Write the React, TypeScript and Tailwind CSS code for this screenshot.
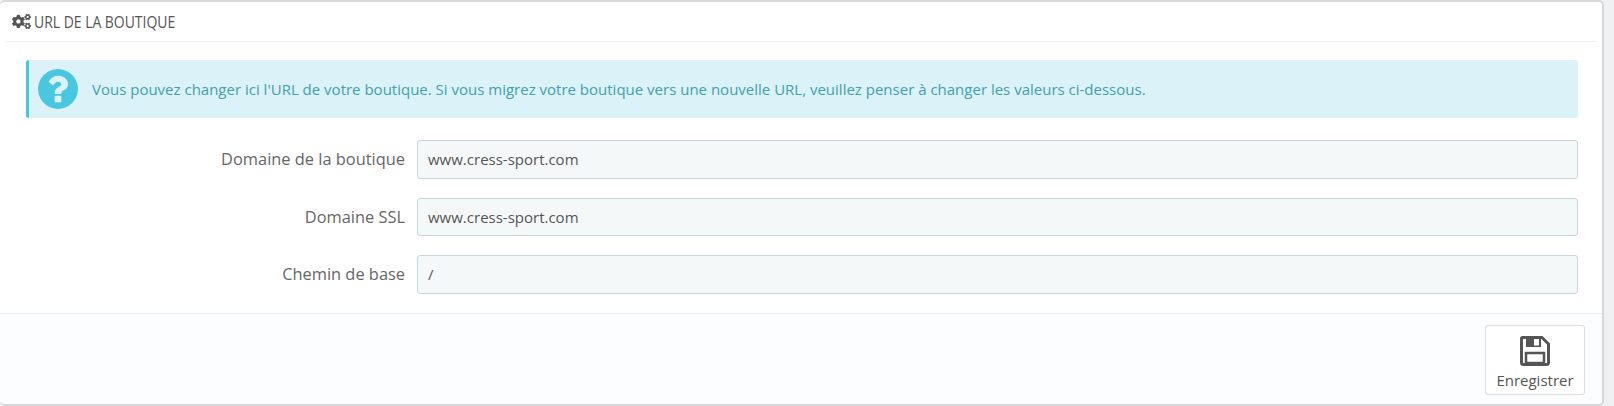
import { FaCogs } from "react-icons/fa";

const fields = [
  { label: "Domaine de la boutique", value: "www.cress-sport.com", height: "h-[39px]", gap: "mb-[19px]" },
  { label: "Domaine SSL", value: "www.cress-sport.com", height: "h-[38px]", gap: "mb-[19px]" },
  { label: "Chemin de base", value: "/", height: "h-[39px]", gap: "mb-0" },
];

function SaveIcon() {
  return (
    <svg width="30" height="30" viewBox="0 0 30 30" fill="none">
      <path d="M2.5 1.5H22L28.5 8V26.5Q28.5 28.5 26.5 28.5H3.5Q1.5 28.5 1.5 26.5V2.5Q1.5 1.5 2.5 1.5Z" stroke="#555" strokeWidth="3" strokeLinejoin="round" />
      <rect x="6" y="17" width="18" height="10" fill="none" stroke="#555" strokeWidth="2.5" />
      <path d="M6 2H21V11H6Z" fill="#555" />
      <rect x="14" y="3" width="5" height="6.5" fill="#fff" />
    </svg>
  );
}

function QuestionIcon() {
  return (
    <svg className="mr-[14px] shrink-0" width="40" height="40" viewBox="128 128 1536 1536" fill="#4ac7e0">
      <path d="M1024 1376v-192q0-14-9-23t-23-9h-192q-14 0-23 9t-9 23v192q0 14 9 23t23 9h192q14 0 23-9t9-23zm256-672q0-88-55.5-163t-138.5-116-170-41q-243 0-371 213-15 24 8 42l132 100q7 6 19 6 16 0 25-12 53-68 86-92 34-24 86-24 48 0 85.5 26t37.5 59q0 38-20 61t-68 45q-63 28-115.5 86.5t-52.5 125.5v36q0 14 9 23t23 9h192q14 0 23-9t9-23q0-19 21.5-49.5t54.5-49.5q32-18 49-28.5t46-35 44.5-48 28-60.5 12.5-81zm384 192q0 209-103 385.5t-279.5 279.5-385.5 103-385.5-103-279.5-279.5-103-385.5 103-385.5 279.5-279.5 385.5-103 385.5 103 279.5 279.5 103 385.5z" />
    </svg>
  );
}

export default function App() {
  return (
    <div className="h-[406px] w-[1614px] overflow-hidden bg-[#eff1f2] font-['Open_Sans',sans-serif] text-[15px] text-[#666]">
      <div className="flex h-[406px] w-[1604px] flex-col rounded-[5px] border-t-2 border-r-2 border-b-2 border-[#d6d8d9] bg-white">
        <div className="mx-[6px] flex h-[40px] shrink-0 items-center gap-[3px] border-b border-[#eeeeee] pl-[6px] text-[#555]">
          <FaCogs className="text-[19px] text-[#555]" />
          <span className="origin-left scale-x-[0.82] text-[17px] whitespace-nowrap">URL DE LA BOUTIQUE</span>
        </div>

        <div className="flex-1 pt-[18px] pr-[24px] pl-[26px]">
          <div className="mb-[22px] flex h-[58px] items-center rounded-[3px] border-l-[3px] border-[#4ac7e0] bg-[#daf2f8] pl-[9px] text-[#44a0ab]">
            <QuestionIcon />
            <span className="text-[15px]">
              Vous pouvez changer ici l'URL de votre boutique. Si vous migrez votre boutique vers une nouvelle URL, veuillez penser à changer les valeurs ci-dessous.
            </span>
          </div>

          {fields.map((field) => (
            <div key={field.label} className={`flex items-center ${field.gap}`}>
              <label className="w-[391px] pr-[12px] text-right text-[16.4px] text-[#666]">{field.label}</label>
              <div className={`flex flex-1 items-center rounded-[3px] border border-[#c7d6db] bg-[#f5f8f9] pl-[10px] text-[15px] text-[#555] ${field.height}`}>
                {field.value}
              </div>
            </div>
          ))}
        </div>

        <div className="flex h-[91px] shrink-0 justify-end rounded-b-[5px] border-t border-[#eeeeee] bg-[#fcfdfe] pt-[11px] pr-[17px]">
          <button className="flex h-[70px] w-[100px] flex-col items-center rounded-[3px] border border-[#dddddd] bg-white pt-[10px] text-[15px] text-[#555]">
            <SaveIcon />
            <span className="mt-[3px]">Enregistrer</span>
          </button>
        </div>
      </div>
    </div>
  );
}
